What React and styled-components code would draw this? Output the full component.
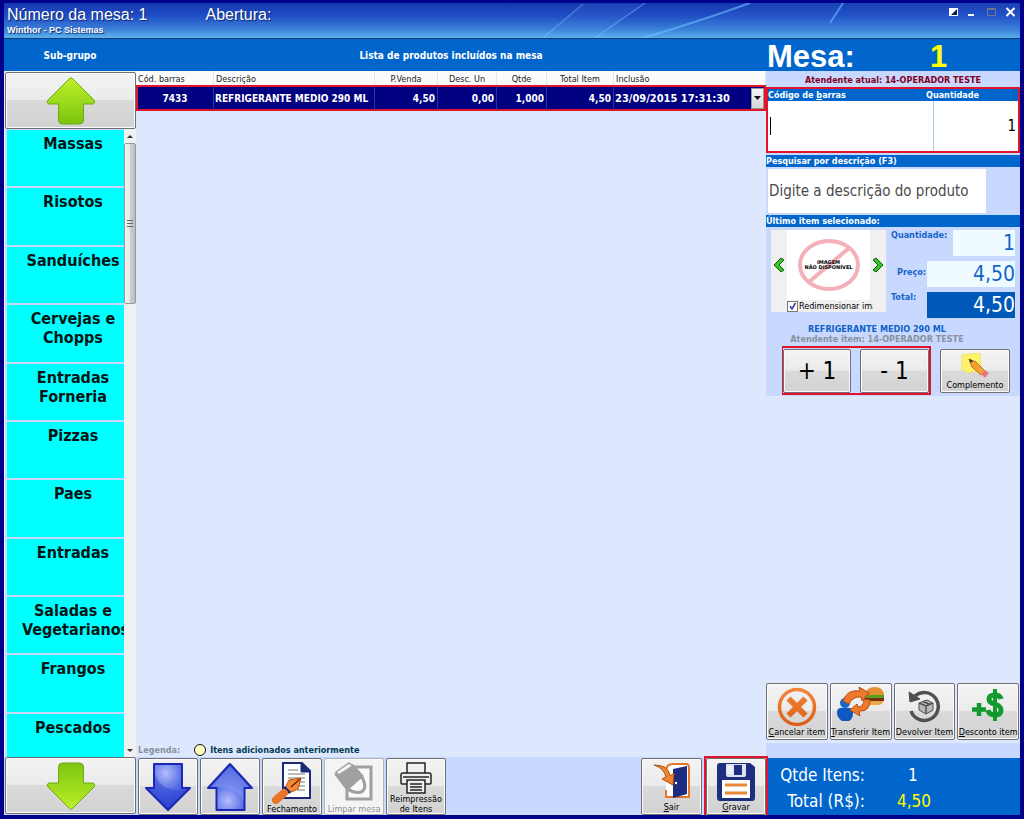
import React from "react";
import styled, { createGlobalStyle, css } from "styled-components";

const ui = '"DejaVu Sans Condensed", "DejaVu Sans", sans-serif';
const c = {
  navy: "#00008b",
  blue: "#0066cc",
  pale: "#dde8ff",
  soft: "#c8d8ff",
  red: "#e0142c",
};
const columns = "132px minmax(0, 1fr) 254px";

const GlobalStyle = createGlobalStyle`
  * { box-sizing: border-box; }
  body { margin: 0; font-family: ${ui}; background: ${c.navy}; }
  button, input, select { font: inherit; margin: 0; }
`;

const Shell = styled.div`
  min-height: 100vh;
  display: flex;
  flex-direction: column;
  border: solid ${c.navy};
  border-width: 3px 4px 4px 4px;
  background: ${c.pale};
  overflow: hidden;
`;

/* ---------- title bar ---------- */
const TitleBar = styled.header`
  position: relative;
  height: 36px;
  flex: none;
  display: flex;
  justify-content: space-between;
  padding: 2px 3px 0 3px;
  border-bottom: 1px solid #0a3c78;
  background: linear-gradient(#1638b0, #1f4cc4 35%, #3a80d8 75%, #5fb2ec);
  color: #fff;
  font-family: "Liberation Sans", Arial, sans-serif;
`;
const Streaks = styled.svg`
  position: absolute;
  top: 0;
  right: 0;
  width: 600px;
  height: 35px;
`;
const TitleText = styled.div`
  position: relative;
  text-shadow: 1px 1px 1px #0b2670;
`;
const TitleLine = styled.h1`
  margin: 0;
  display: flex;
  gap: 58px;
  font-size: 16px;
  line-height: 20px;
  font-weight: 400;
`;
const TitleSub = styled.p`
  margin: 0;
  font-size: 9px;
  line-height: 10px;
  font-weight: 700;
`;
const WindowButtons = styled.div`
  position: relative;
  display: flex;
  align-items: flex-start;
  gap: 6px;
`;
const WindowButton = styled.button`
  width: 13px;
  height: 13px;
  padding: 0;
  border: 0;
  background: none;
  svg { display: block; }
`;

/* ---------- section header ---------- */
const SectionBar = styled.div`
  flex: none;
  display: grid;
  grid-template-columns: ${columns};
  grid-template-rows: 32px;
  align-items: center;
  background: ${c.blue};
  color: #fff;
`;
const SectionTitle = styled.h2`
  margin: 0;
  text-align: center;
  font-size: 10px;
  font-weight: 700;
`;
const TableNumber = styled.div`
  display: grid;
  grid-template-columns: 163px 1fr;
  font: 700 31px/32px "Liberation Sans", Arial, sans-serif;
  padding: 4px 0 0 1px;
`;
const Yellow = styled.span`
  color: #ffff00;
`;

/* ---------- body ---------- */
const Body = styled.div`
  flex: 1;
  display: grid;
  grid-template-columns: ${columns};
`;
const Sidebar = styled.nav`
  display: flex;
  flex-direction: column;
  padding: 1px 0 0 1px;
  background: #f0f0f0;
`;
const PushButton = styled.button`
  position: relative;
  display: flex;
  flex-direction: column;
  align-items: center;
  justify-content: ${(p) => (p.$label ? "space-between" : "center")};
  width: ${(p) => p.$width || "100%"};
  height: ${(p) => p.$height || "57px"};
  flex: none;
  padding: ${(p) => (p.$label ? "3px 0 2px" : "0")};
  border: 1px solid #707070;
  border-radius: 2px;
  background: linear-gradient(#f3f3f3, #ebebeb 48%, #dadada 50%, #d2d2d2);
  box-shadow: inset 0 0 0 1px #fafafa;
  color: #000;
  font-size: ${(p) => (p.$large ? "24px" : "9px")};
  line-height: ${(p) => (p.$large ? "26px" : "10px")};
  white-space: nowrap;
  svg { display: block; flex: none; }
  ${(p) =>
    p.disabled &&
    css`
      background: #f4f4f4;
      border-color: #b0b4b8;
      color: #909090;
    `}
`;
const GroupArea = styled.div`
  flex: 1;
  display: grid;
  grid-template-columns: minmax(0, 1fr) 12px;
`;
const GroupList = styled.div`
  display: flex;
  flex-direction: column;
  gap: 2px;
  padding: 1px 0 0 2px;
  background: ${c.soft};
`;
const GroupButton = styled.button`
  flex: ${(p) => (p.$cut ? 3 : 4)} 1 0;
  display: flex;
  align-items: flex-start;
  justify-content: flex-start;
  min-height: 40px;
  padding: 4px 0 0 15px;
  border: 0;
  background: #00ffff;
  color: #061414;
  overflow: hidden;
  font-size: 16px;
  line-height: 19px;
  font-weight: 700;
  white-space: pre;
`;
const GroupLabel = styled.span`
  min-width: 100%;
  text-align: center;
`;
const ScrollTrack = styled.div`
  display: flex;
  flex-direction: column;
  align-items: center;
  background: #f0f0f0;
`;
const ScrollArrow = styled.svg`
  width: 12px;
  height: 14px;
  flex: none;
`;
const ScrollThumb = styled.div`
  width: 12px;
  height: 161px;
  border: 1px solid #989898;
  border-radius: 2px;
  background: linear-gradient(90deg, #f5f5f5, #e6e6e6 50%, #cfcfcf 55%, #bcbcbc);
  display: grid;
  place-items: center;
`;
const Spacer = styled.div`
  flex: 1;
`;

const Center = styled.main`
  display: flex;
  flex-direction: column;
  justify-content: space-between;
  background: ${c.pale};
`;
const Products = styled.table`
  width: 100%;
  table-layout: fixed;
  border-collapse: separate;
  border-spacing: 0;
`;
const Th = styled.th`
  height: 14px;
  padding: 1px 2px 0;
  background: #fbfbfb;
  border-right: 1px solid #e6e6e6;
  color: #222;
  font-size: 9px;
  line-height: 12px;
  font-weight: 400;
  text-align: ${(p) => p.$align || "center"};
`;
const Td = styled.td`
  height: 26px;
  padding: 0 2px 0 1px;
  background: #000080;
  border: solid ${c.red};
  border-width: 2px 0;
  border-right: 1px solid #2038a0;
  color: #fff;
  font-size: 10px;
  font-weight: 700;
  white-space: nowrap;
  text-align: ${(p) => p.$align || "right"};
  &:first-child { border-left: 2px solid ${c.red}; }
  &:last-child { border-right: 2px solid ${c.red}; padding-right: 0; }
`;
const DateCell = styled.div`
  display: flex;
  align-items: center;
  justify-content: space-between;
  font-size: 11px;
`;
const DropButton = styled.button`
  width: 13px;
  height: 21px;
  padding: 0;
  border: 1px solid #999;
  background: linear-gradient(#f4f4f4, #d6d6d6);
  display: grid;
  place-items: center;
`;
const Legend = styled.p`
  margin: 0;
  padding: 0 0 0 2px;
  display: flex;
  align-items: center;
  height: 14px;
  font-size: 9px;
  font-weight: 700;
  color: #003c50;
`;
const LegendName = styled.span`
  color: #8890a0;
  margin-right: 14px;
`;
const LegendDot = styled.span`
  width: 12px;
  height: 12px;
  margin-right: 4px;
  border: 1px solid #111;
  border-radius: 50%;
  background: #ffffc0;
`;

/* ---------- right panel ---------- */
const Panel = styled.aside`
  display: flex;
  flex-direction: column;
  justify-content: space-between;
  background: ${c.pale};
`;
const PanelTop = styled.div`
  padding-bottom: 1px;
  background: ${c.soft};
`;
const Attendant = styled.p`
  margin: 0;
  height: 16px;
  padding-top: 4px;
  text-align: center;
  font-size: 9px;
  line-height: 11px;
  font-weight: 700;
  color: #800020;
`;
const BarcodeBox = styled.div`
  display: grid;
  grid-template-columns: 165px minmax(0, 1fr);
  height: 66px;
  margin-bottom: 2px;
  border: 2px solid ${c.red};
  background: #fff;
`;
const Field = styled.div`
  position: relative;
  display: flex;
  flex-direction: column;
  & + & { border-left: 1px solid #a9c6ea; }
`;
const Strip = styled.label`
  display: block;
  height: 12px;
  background: ${c.blue};
  color: #fff;
  font-size: 9px;
  line-height: 12px;
  font-weight: 700;
  overflow: hidden;
`;
const StripHeading = styled(Strip).attrs({ as: "h3" })`
  margin: 0;
`;
const QuantityStrip = styled(Strip)`
  margin-left: -8px;
`;
const EntryInput = styled.input`
  flex: 1;
  width: 100%;
  min-width: 0;
  padding: 0 2px 0 4px;
  border: 0;
  outline: 0;
  background: #fff;
  color: #000;
  font-size: 15px;
  text-align: ${(p) => p.$align || "left"};
`;
const Caret = styled.span`
  position: absolute;
  left: 2px;
  top: 28px;
  width: 1px;
  height: 18px;
  background: #000;
`;
const SearchInput = styled.input`
  display: block;
  width: 218px;
  height: 44px;
  margin: 2px 0 2px 2px;
  padding: 0 0 0 1px;
  border: 0;
  background: #fff;
  font-size: 15px;
  &::placeholder { color: #4a4a4a; opacity: 1; }
`;
const ItemRow = styled.div`
  display: grid;
  grid-template-columns: 115px minmax(0, 1fr);
  gap: 5px;
  padding: 3px 5px 0 5px;
`;
const PictureBox = styled.div`
  display: grid;
  grid-template-columns: 16px minmax(0, 1fr) 16px;
  grid-template-rows: 70px 12px;
  height: 82px;
  background: #f0f0f0;
`;
const Arrow = styled.button`
  padding: 0;
  border: 0;
  background: none;
  display: grid;
  place-items: center;
`;
const NoImage = styled.div`
  position: relative;
  background: #fff;
  display: grid;
  place-items: center;
`;
const NoImageText = styled.span`
  position: absolute;
  font: 700 5px/5px "DejaVu Sans", sans-serif;
  text-align: center;
  white-space: nowrap;
  color: #000;
`;
const ResizeOption = styled.label`
  grid-column: 2 / 4;
  display: flex;
  align-items: center;
  gap: 1px;
  margin-right: 13px;
  overflow: hidden;
  font-size: 9px;
  line-height: 12px;
  white-space: nowrap;
`;
const Tick = styled.input`
  appearance: none;
  width: 11px;
  height: 11px;
  flex: none;
  border: 1px solid #777;
  background: #fff
    url("data:image/svg+xml,%3Csvg xmlns='http://www.w3.org/2000/svg' viewBox='0 0 9 9'%3E%3Cpath d='M2 4.2l2 2.6L7.5 1' fill='none' stroke='%232a3a90' stroke-width='1.5'/%3E%3C/svg%3E");
`;
const Values = styled.div`
  display: flex;
  flex-direction: column;
  gap: 5px;
`;
const ValueRow = styled.div`
  display: flex;
  justify-content: space-between;
  height: 26px;
`;
const ValueLabel = styled.label`
  padding-left: ${(p) => p.$indent || "0"};
  padding-top: ${(p) => p.$drop || "0"};
  font-size: 9px;
  line-height: 11px;
  font-weight: 700;
  color: #1464cc;
`;
const ValueInput = styled.input`
  width: ${(p) => p.$width || "88px"};
  padding: 0;
  border: 0;
  background: ${(p) => (p.$total ? "#0058b8" : "#f0fbff")};
  color: ${(p) => (p.$total ? "#fff" : "#1464cc")};
  font-size: 21px;
  text-align: right;
`;
const ItemNames = styled.div`
  padding: 6px 32px 0 0;
`;
const ItemName = styled.p`
  margin: 0;
  text-align: center;
  font-size: 9px;
  line-height: 10px;
  font-weight: 700;
  color: ${(p) => (p.$muted ? "#8890a0" : "#0e62c8")};
`;
const AdjustRow = styled.div`
  display: flex;
  align-items: center;
  justify-content: space-between;
  margin-top: 2px;
  padding: 0 10px 0 16px;
`;
const AdjustPair = styled.div`
  display: flex;
  gap: 9px;
  height: 49px;
  padding: 1px 0 0;
  border: 2px solid ${c.red};
  border-left-width: 1px;
`;
const ActionRow = styled.div`
  display: grid;
  grid-template-columns: repeat(4, minmax(0, 1fr));
  gap: 2px;
  padding: 0 1px 3px 0;
`;
const SoftBand = styled.div`
  height: 14px;
  background: ${c.soft};
`;

/* ---------- footer ---------- */
const Footer = styled.footer`
  flex: none;
  display: grid;
  grid-template-columns: ${columns};
  height: 58px;
  background: ${c.soft};
`;
const FooterLeft = styled.div`
  padding: 0 0 0 1px;
`;
const FooterCenter = styled.div`
  display: flex;
  justify-content: space-between;
`;
const ButtonGroup = styled.div`
  display: flex;
  gap: 2px;
  padding: 1px 0 0 2px;
`;
const SaveGroup = styled(ButtonGroup)`
  position: relative;
  margin-right: -2px;
`;
const SaveFrame = styled.div`
  display: flex;
  width: 64px;
  margin-top: -2px;
  border: 2px solid ${c.red};
`;
const Totals = styled.dl`
  margin: 1px 0 0;
  display: grid;
  grid-template-columns: 99px 1fr;
  column-gap: 32px;
  align-content: center;
  background: ${c.blue};
  color: #fff;
  font-size: 17px;
  line-height: 26px;
`;
const TotalName = styled.dt`
  text-align: right;
`;
const TotalValue = styled.dd`
  margin: 0;
  padding-left: ${(p) => (p.$short ? "11px" : "0")};
  color: ${(p) => (p.$short ? "#fff" : "#ffff00")};
`;

/* ---------- drawings ---------- */
const GreenArrow = ({ down }) => (
  <svg width="50" height="50" viewBox="0 0 50 50" aria-hidden="true">
    <defs>
      <linearGradient id={down ? "gd" : "gu"} x1="0" y1="0" x2="0" y2="1">
        <stop offset="0" stopColor="#bdf02a" />
        <stop offset="1" stopColor="#7cc410" />
      </linearGradient>
    </defs>
    <path
      transform={down ? "rotate(180 25 25)" : undefined}
      d="M23.500 2.500Q25 1 26.500 2.500L48 24Q50 28 46 28H37.500V44Q37.500 48 33.500 48H16.500Q12.500 48 12.500 44V28H4Q0 28 2 24Z"
      fill={`url(#${down ? "gd" : "gu"})`}
      stroke="#6aaa10"
      strokeWidth="1"
    />
  </svg>
);

const BlueArrow = ({ up }) => (
  <svg width="48" height="50" viewBox="0 0 48 50" aria-hidden="true">
    <defs>
      <radialGradient id={up ? "bu" : "bd"} cx=".45" cy={up ? ".8" : ".2"} r=".8">
        <stop offset="0" stopColor="#b4bcfa" />
        <stop offset=".5" stopColor="#5068e4" />
        <stop offset="1" stopColor="#2038c8" />
      </radialGradient>
    </defs>
    <path
      d={up ? "M24 2L46 26H38.500V48H10.500V26H2Z" : "M24 48L46 26H38V2H10V26H2Z"}
      fill={`url(#${up ? "bu" : "bd"})`}
      stroke="#1a28b4"
      strokeWidth="2"
      strokeLinejoin="round"
    />
    <path
      d={up ? "M24 4L43 25H37.500V38Q32 28 20 26Q10 24 5 25Z" : "M11 12Q14 24 29 28Q40 30 43 27L24 46L5 27H11Z"}
      fill={up ? "#8ea0f6" : "#3048d4"}
      opacity=".5"
    />
  </svg>
);

const CloseBillIcon = () => (
  <svg width="42" height="42" viewBox="0 0 42 42" aria-hidden="true">
    <path d="M12 1H31L39 9V36H12Z" fill="#fff" stroke="#1c2a78" strokeWidth="2" />
    <path d="M30 1V10H39Z" fill="#1c2a78" stroke="#1c2a78" />
    <path d="M17 8H27M17 12H34M17 16H34M22 20H34M26 24H34M26 28H34" stroke="#777" />
    <path d="M30 16L18 18L14 26L18 31L27 27Z" fill="#f48a34" stroke="#c05010" />
    <path d="M29 17L20 25" stroke="#702808" strokeWidth="1.500" />
    <path d="M13 25L19 31" stroke="#1c2a78" strokeWidth="3" />
    <path d="M5 38L13 31" stroke="#ec7428" strokeWidth="8" strokeLinecap="round" />
  </svg>
);

const ClearIcon = () => (
  <svg width="42" height="42" viewBox="0 0 42 42" aria-hidden="true">
    <path d="M14 5H38V37H14Z" fill="#fafafa" stroke="#a0a0a0" strokeWidth="3" />
    <path d="M1 12L20 2L31 14L14 29Z" fill="#a0a0a0" />
    <path d="M3 10L16 1L20 4L6 13Z" fill="#f4f4f4" stroke="#a0a0a0" strokeWidth="1.500" />
    <path d="M29 15Q35 27 28 30Q22 32 15 27" fill="none" stroke="#a0a0a0" strokeWidth="3" />
  </svg>
);

const PrintIcon = () => (
  <svg width="34" height="32" viewBox="0 0 34 32" fill="none" stroke="#222" strokeWidth="1.500" aria-hidden="true">
    <path d="M8 11V1H26V11M8 22H3Q2 22 2 21V13Q2 11 4 11H30Q32 11 32 13V21Q32 22 31 22H26" />
    <path d="M4 15H30" />
    <path d="M8 18H26V31H8ZM11 22H23M11 25H23M11 28H23" fill="#eee" />
  </svg>
);

const ExitIcon = () => (
  <svg width="38" height="38" viewBox="0 0 38 38" aria-hidden="true">
    <path d="M13 9Q13 2 20 2H33Q36 2 36 6V35H13V28" fill="#fff" stroke="#e07828" strokeWidth="2" />
    <path d="M20 7L34 4V32L20 36Z" fill="#1c2c80" />
    <circle cx="23" cy="21" r="1.200" fill="#fff" />
    <path d="M1 3Q16 3 17 14L21 11L20 23L9 17L13 15Q11 6 1 3Z" fill="#f08430" stroke="#b04c10" />
  </svg>
);

const SaveIcon = () => (
  <svg width="40" height="40" viewBox="0 0 40 40" aria-hidden="true">
    <path d="M4 1H34L39 5V36Q39 39 36 39H4Q1 39 1 36V4Q1 1 4 1Z" fill="#1e2e80" />
    <path d="M10 2H30V13Q30 15 28 15H12Q10 15 10 13Z" fill="#dfe3f0" />
    <path d="M18 3H26V13H18Z" fill="#1e2e80" />
    <path d="M19 4H25V12H19Z" fill="#f4f6fc" transform="translate(-8 0)" opacity=".6" />
    <path d="M6 18H34V36H6Z" fill="#fff" />
    <path d="M9 23H31M9 31H31" stroke="#e88838" strokeWidth="3" />
  </svg>
);

const CancelIcon = () => (
  <svg width="40" height="40" viewBox="0 0 40 40" fill="none" aria-hidden="true">
    <defs>
      <linearGradient id="cx" gradientUnits="userSpaceOnUse" x1="0" y1="0" x2="0" y2="40">
        <stop offset="0" stopColor="#f4883c" />
        <stop offset="1" stopColor="#dc5c14" />
      </linearGradient>
    </defs>
    <circle cx="20" cy="20" r="17.500" stroke="url(#cx)" strokeWidth="3.500" />
    <path d="M11.500 11.500L28.500 28.500M28.500 11.500L11.500 28.500" stroke="url(#cx)" strokeWidth="6" />
  </svg>
);

const TransferIcon = () => (
  <svg width="48" height="36" viewBox="0 0 48 36" aria-hidden="true">
    <path d="M28 8Q29 0 38 0Q46 0 47 8Z" fill="#e09030" />
    <path d="M27 8H47V11H27Z" fill="#5aa020" />
    <path d="M27 11H47V14H27Z" fill="#7a3010" />
    <path d="M29 14H46Q46 18 40 18H31Z" fill="#e8a848" />
    <circle cx="8" cy="16" r="5" fill="#1464cc" />
    <path d="M0 25Q0 20 8 21Q17 20 16 26Q16 32 12 34H5Q0 31 0 25Z" fill="#1058c0" />
    <path d="M6 14Q10 2 23 4L22 0L32 6L25 14L24 10Q16 9 12 17Z" fill="#f07a2c" stroke="#b44c10" />
    <path d="M33 13Q33 25 22 24L23 29L13 23L20 17L21 20Q27 20 27 12Z" fill="#f07a2c" stroke="#b44c10" />
  </svg>
);

const ReturnIcon = () => (
  <svg width="34" height="38" viewBox="0 0 34 38" fill="none" stroke="#505050" aria-hidden="true">
    <path d="M8 9A14 14 0 1 1 4 24" strokeWidth="3.500" />
    <path d="M2 5L3 15L13 12Z" fill="#505050" />
    <path d="M12 16L20 13L26 16V23L19 27L12 23Z" fill="#b8b8b8" />
    <path d="M12 16L19 19L26 16M19 19V27M16 14.500L23 17.500" strokeWidth="1.500" />
  </svg>
);

const DiscountIcon = () => (
  <svg width="32" height="36" viewBox="0 0 32 36" fill="none" stroke="#129a2c" aria-hidden="true">
    <path d="M7 16V29M0 22.500H14" strokeWidth="4.500" />
    <path d="M29 12Q28 8 23 8Q17 8 17 12Q17 16 23 17Q29 19 29 23Q29 28 23 28Q17 28 16 23" strokeWidth="5" />
    <path d="M23 2V34" strokeWidth="4" />
  </svg>
);

const NoteIcon = () => (
  <svg width="28" height="26" viewBox="0 0 28 26" aria-hidden="true">
    <path d="M1 2L19 0L20 17L6 20L1 16Z" fill="#fff36a" stroke="#f0e468" />
    <path d="M8 6L11 14L20 22L24 18L15 9Z" fill="#f6a030" stroke="#b87020" />
    <path d="M8 6L9.500 10L12 8Z" fill="#333" />
    <path d="M20 21L24 17L28 20L24 25Z" fill="#e87878" />
  </svg>
);

const Chevron = ({ left }) => (
  <svg width="12" height="16" viewBox="0 0 12 16" aria-hidden="true">
    <path
      d={left ? "M8 1L11 3L6 8L11 13L8 15L1 8Z" : "M4 1L1 3L6 8L1 13L4 15L11 8Z"}
      fill="#34c424"
      stroke="#145c10"
    />
  </svg>
);

const TriangleDown = () => (
  <svg width="7" height="4" viewBox="0 0 7 4" aria-hidden="true">
    <path d="M0 0H7L3.500 4Z" fill="#111" />
  </svg>
);

/* ---------- data ---------- */
const groups = [
  "Massas",
  "Risotos",
  "Sanduíches",
  "Cervejas e\nChopps",
  "Entradas\nForneria",
  "Pizzas",
  "Paes",
  "Entradas",
  "Saladas e\nVegetarianos",
  "Frangos",
  "Pescados",
];

export default function App() {
  return (
    <>
      <GlobalStyle />
      <Shell>
        <TitleBar>
          <Streaks viewBox="0 0 600 35" aria-hidden="true">
            <path d="M123 35L163 1H225L175 35Z" fill="#4f9cf0" opacity=".12" />
            <path d="M223 35Q280 18 330 0H600V35Z" fill="#3a80e0" opacity=".12" />
            <path d="M123 35L163 1M175 35L225 0" stroke="#8cd0ff" strokeWidth="1.500" opacity=".35" />
            <path d="M223 35Q280 18 330 0M410 20L423 0" fill="none" stroke="#6cc0ff" strokeWidth="2" opacity=".6" />
          </Streaks>
          <TitleText>
            <TitleLine>
              <span>Número da mesa: 1</span>
              <span>Abertura:</span>
            </TitleLine>
            <TitleSub>Winthor - PC Sistemas</TitleSub>
          </TitleText>
          <WindowButtons>
            <WindowButton aria-label="Tema">
              <svg width="13" height="13"><path d="M2 3H11V11H2Z" fill="#fff" /><path d="M10 4V10H4Z" fill="#0a2050" /></svg>
            </WindowButton>
            <WindowButton aria-label="Minimizar">
              <svg width="13" height="13"><path d="M2 9H8V11H2Z" fill="#fff" /></svg>
            </WindowButton>
            <WindowButton aria-label="Maximizar">
              <svg width="13" height="13"><path d="M2.500 3.500H10.500V10.500H2.500ZM2 4.500H11" fill="none" stroke="#6c7890" /></svg>
            </WindowButton>
            <WindowButton aria-label="Fechar">
              <svg width="13" height="13"><path d="M2.500 3L10.500 11M10.500 3L2.500 11" stroke="#fff" strokeWidth="2" /></svg>
            </WindowButton>
          </WindowButtons>
        </TitleBar>

        <SectionBar>
          <SectionTitle>Sub-grupo</SectionTitle>
          <SectionTitle>Lista de produtos incluídos na mesa</SectionTitle>
          <TableNumber>
            <span>Mesa:</span>
            <Yellow>1</Yellow>
          </TableNumber>
        </SectionBar>

        <Body>
          <Sidebar>
            <PushButton aria-label="Grupos anteriores"><GreenArrow /></PushButton>
            <GroupArea>
              <GroupList>
                {groups.map((g, i) => (
                  <GroupButton key={g} $cut={i === groups.length - 1}>
                    <GroupLabel>{g}</GroupLabel>
                  </GroupButton>
                ))}
              </GroupList>
              <ScrollTrack>
                <ScrollArrow><path d="M3 9H9L6 6Z" fill="#333" /></ScrollArrow>
                <ScrollThumb>
                  <svg width="6" height="7"><path d="M0 .5H6M0 3.500H6M0 6.500H6" stroke="#666" /></svg>
                </ScrollThumb>
                <Spacer />
                <ScrollArrow><path d="M3 6H9L6 9Z" fill="#333" /></ScrollArrow>
              </ScrollTrack>
            </GroupArea>
          </Sidebar>

          <Center>
            <Products>
              <colgroup>
                <col width="78" />
                <col width="161" />
                <col width="63" />
                <col width="59" />
                <col width="50" />
                <col width="67" />
                <col />
              </colgroup>
              <thead>
                <tr>
                  <Th $align="left">Cód. barras</Th>
                  <Th $align="left">Descrição</Th>
                  <Th>P.Venda</Th>
                  <Th>Desc. Un</Th>
                  <Th>Qtde</Th>
                  <Th>Total Item</Th>
                  <Th $align="left">Inclusão</Th>
                </tr>
              </thead>
              <tbody>
                <tr>
                  <Td $align="center">7433</Td>
                  <Td $align="left">REFRIGERANTE MEDIO 290 ML</Td>
                  <Td>4,50</Td>
                  <Td>0,00</Td>
                  <Td>1,000</Td>
                  <Td>4,50</Td>
                  <Td $align="left">
                    <DateCell>
                      23/09/2015 17:31:30
                      <DropButton aria-label="Abrir lista"><TriangleDown /></DropButton>
                    </DateCell>
                  </Td>
                </tr>
              </tbody>
            </Products>
            <Legend>
              <LegendName>Legenda:</LegendName>
              <LegendDot />
              Itens adicionados anteriormente
            </Legend>
          </Center>

          <Panel>
            <PanelTop>
              <Attendant>Atendente atual: 14-OPERADOR TESTE</Attendant>
              <BarcodeBox>
                <Field>
                  <Strip htmlFor="codigo">Código de <u>b</u>arras</Strip>
                  <EntryInput id="codigo" />
                  <Caret />
                </Field>
                <Field>
                  <QuantityStrip htmlFor="qtd">Quantidade</QuantityStrip>
                  <EntryInput id="qtd" $align="right" defaultValue="1" />
                </Field>
              </BarcodeBox>
              <Strip htmlFor="busca">Pesquisar por descrição (F3)</Strip>
              <SearchInput id="busca" placeholder="Digite a descrição do produto" />
              <StripHeading>Último item selecionado:</StripHeading>
              <ItemRow>
                <PictureBox>
                  <Arrow aria-label="Anterior"><Chevron left /></Arrow>
                  <NoImage>
                    <svg width="62" height="52" viewBox="0 0 62 52" fill="none" stroke="#f4b0b8" strokeWidth="4" aria-hidden="true">
                      <ellipse cx="31" cy="26" rx="29" ry="24" />
                      <path d="M11 43L51 9" />
                    </svg>
                    <NoImageText>IMAGEM<br />NÃO DISPONÍVEL</NoImageText>
                  </NoImage>
                  <Arrow aria-label="Próxima"><Chevron /></Arrow>
                  <ResizeOption>
                    <Tick type="checkbox" defaultChecked />
                    Redimensionar imagem
                  </ResizeOption>
                </PictureBox>
                <Values>
                  <ValueRow>
                    <ValueLabel htmlFor="v1">Quantidade:</ValueLabel>
                    <ValueInput id="v1" $width="62px" defaultValue="1" />
                  </ValueRow>
                  <ValueRow>
                    <ValueLabel htmlFor="v2" $indent="6px" $drop="6px">Preço:</ValueLabel>
                    <ValueInput id="v2" defaultValue="4,50" />
                  </ValueRow>
                  <ValueRow>
                    <ValueLabel htmlFor="v3">Total:</ValueLabel>
                    <ValueInput id="v3" $total defaultValue="4,50" />
                  </ValueRow>
                </Values>
              </ItemRow>
              <ItemNames>
                <ItemName>REFRIGERANTE MEDIO 290 ML</ItemName>
                <ItemName $muted>Atendente item: 14-OPERADOR TESTE</ItemName>
              </ItemNames>
              <AdjustRow>
                <AdjustPair>
                  <PushButton $large $width="68px" $height="44px">+ 1</PushButton>
                  <PushButton $large $width="69px" $height="44px">- 1</PushButton>
                </AdjustPair>
                <PushButton $label $width="70px" $height="44px"><NoteIcon />Complemento</PushButton>
              </AdjustRow>
            </PanelTop>
            <div>
              <ActionRow>
                <PushButton $label><CancelIcon /><span><u>C</u>ancelar item</span></PushButton>
                <PushButton $label><TransferIcon /><span><u>T</u>ransferir Item</span></PushButton>
                <PushButton $label><ReturnIcon />Devolver Item</PushButton>
                <PushButton $label><DiscountIcon /><span><u>D</u>esconto item</span></PushButton>
              </ActionRow>
              <SoftBand />
            </div>
          </Panel>
        </Body>

        <Footer>
          <FooterLeft>
            <PushButton aria-label="Próximos grupos"><GreenArrow down /></PushButton>
          </FooterLeft>
          <FooterCenter>
            <ButtonGroup>
              <PushButton $width="60px" aria-label="Descer"><BlueArrow /></PushButton>
              <PushButton $width="60px" aria-label="Subir"><BlueArrow up /></PushButton>
              <PushButton $label $width="60px"><CloseBillIcon />Fechamento</PushButton>
              <PushButton $label $width="60px" disabled><ClearIcon />Limpar mesa</PushButton>
              <PushButton $label $width="60px"><PrintIcon /><span>Reimpressão<br />de Itens</span></PushButton>
            </ButtonGroup>
            <SaveGroup>
              <PushButton $label $width="61px"><ExitIcon /><span><u>S</u>air</span></PushButton>
              <SaveFrame>
                <PushButton $label><SaveIcon /><span><u>G</u>ravar</span></PushButton>
              </SaveFrame>
            </SaveGroup>
          </FooterCenter>
          <Totals>
            <TotalName>Qtde Itens:</TotalName>
            <TotalValue $short>1</TotalValue>
            <TotalName>Total (R$):</TotalName>
            <TotalValue>4,50</TotalValue>
          </Totals>
        </Footer>
      </Shell>
    </>
  );
}
